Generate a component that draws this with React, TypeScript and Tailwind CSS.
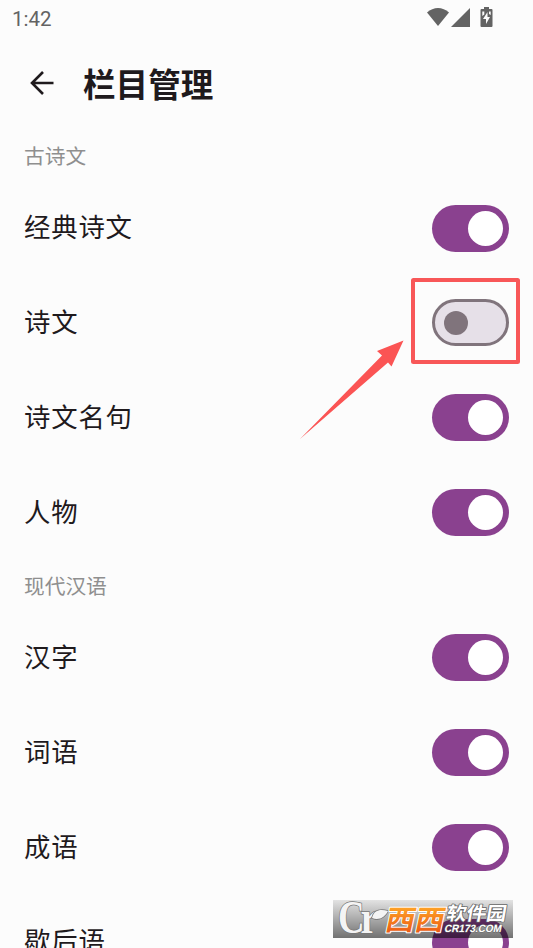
import React from 'react';

interface Item {
  label: string;
  enabled: boolean;
}

interface Section {
  title: string;
  items: Item[];
}

const sections: Section[] = [
  {
    title: '古诗文',
    items: [
      { label: '经典诗文', enabled: true },
      { label: '诗文', enabled: false },
      { label: '诗文名句', enabled: true },
      { label: '人物', enabled: true }
    ]
  },
  {
    title: '现代汉语',
    items: [
      { label: '汉字', enabled: true },
      { label: '词语', enabled: true },
      { label: '成语', enabled: true },
      { label: '歇后语', enabled: true }
    ]
  }
];

const StatusBar: React.FC = () => (
  <div className="flex h-9 items-center justify-between pl-3 pr-10 text-[#636363]">
    <span className="pt-0.5 font-[Roboto] text-[20.5px] leading-none">1:42</span>
    <div className="flex items-center pb-0.5">
      <svg width="22" height="18" viewBox="0 0 22 18" fill="currentColor">
        <path d="M0 4.5C6.5-1.5 15.5-1.5 22 4.5L11 18Z" />
      </svg>
      <svg className="ml-0.5" width="19" height="19" viewBox="0 0 19 19" fill="currentColor">
        <path d="M19 0V19H0Z" />
      </svg>
      <svg className="ml-2.5" width="13" height="20" viewBox="0 0 13 20">
        <path d="M4 0h5v2h2.5q1 0 1 1v16q0 1-1 1H1.5q-1 0-1-1V3q0-1 1-1H4Z" fill="currentColor" />
        <path d="M7.5 5 3 12h3v5l4-7H7.5Z" fill="#fcfcfc" />
        <path d="M2.3 4.5h2v3l-2 1.5ZM9 4.5h1.7V8L9 7Z" fill="#fcfcfc" />
      </svg>
    </div>
  </div>
);

const Toggle: React.FC<{ enabled: boolean }> = ({ enabled }) => (
  <button
    role="switch"
    aria-checked={enabled}
    className={`flex h-[47px] w-[77px] items-center rounded-full ${
      enabled ? 'justify-end bg-[#8a418f] pr-1.5' : 'border-[3px] border-[#80747c] bg-[#e6e0e8] pl-[9px]'
    }`}
  >
    <span className={`rounded-full ${enabled ? 'size-[35px] bg-white' : 'size-6 bg-[#80747c]'}`} />
  </button>
);

// Red frame and arrow that point out the switched-off item
const Callout: React.FC = () => (
  <svg
    className="pointer-events-none absolute left-[300px] top-[278px]"
    width="221"
    height="162"
    viewBox="0 0 221 162"
  >
    <rect x="113" y="2" width="105" height="82" rx="0.5" fill="none" stroke="#f85758" strokeWidth="4" strokeLinejoin="round" />
    <path d="M103.5 62.5 77 73 82 77.5 0 161 88 84.5 91.5 88.5Z" fill="#fb5454" />
  </svg>
);

const Watermark: React.FC = () => (
  <div className="absolute left-[333px] top-[900px] h-[38px] w-[180px] bg-linear-to-b from-black/10 to-black/55">
    <svg width="180" height="38" viewBox="0 0 180 38">
      <defs>
        <linearGradient id="orange" x1="0" y1="0" x2="0" y2="1">
          <stop offset="0.2" stopColor="#ffa928" />
          <stop offset="1" stopColor="#e84d12" />
        </linearGradient>
      </defs>
      <g fill="#f4f4f4" stroke="#777" strokeWidth="1.6" paintOrder="stroke" fontFamily="Liberation Serif, serif">
        <text transform="translate(5 33) scale(0.8 1)" fontSize="46" fontWeight="700">C</text>
        <text transform="translate(27.500 32.5) scale(0.85 1)" fontSize="46" fontWeight="700">r</text>
        <path d="M39 18C41 10 47 9 55 11C52 17 46 21 39 18Z" />
      </g>
      <g fontFamily="Noto Sans CJK SC, sans-serif" fontWeight="700" paintOrder="stroke" strokeLinejoin="round">
        <text
          transform="translate(51 29.5) skewX(-12)"
          fontSize="28"
          textLength="59"
          lengthAdjust="spacingAndGlyphs"
          fill="url(#orange)"
          stroke="#fff"
          strokeWidth="2"
        >
          西西
        </text>
        <text
          transform="translate(112.5 20) skewX(-10)"
          fontSize="18.5"
          textLength="60"
          lengthAdjust="spacingAndGlyphs"
          fill="#fff"
          stroke="#666"
          strokeWidth="1.5"
        >
          软件园
        </text>
      </g>
      <text
        transform="translate(111 32) skewX(-12)"
        fontFamily="Liberation Sans, sans-serif"
        fontWeight="700"
        fontSize="10.5"
        textLength="57"
        lengthAdjust="spacingAndGlyphs"
        fill="#fff"
        stroke="#666"
        strokeWidth="1"
        paintOrder="stroke"
      >
        CR173.COM
      </text>
    </svg>
  </div>
);

const App: React.FC = () => {
  return (
    <div className="relative h-[948px] w-[533px] overflow-hidden bg-[#fcfcfc] font-['Noto_Sans_CJK_SC',sans-serif] text-[#1f1a1d]">
      <StatusBar />

      {/* App bar */}
      <header className="flex h-[94.6px] items-center pl-[29.5px]">
        <svg width="24" height="24" viewBox="0 0 24 24" fill="none" stroke="currentColor" strokeWidth="2.6">
          <path d="M23.5 12H2M13 1 2 12l11 11" />
        </svg>
        <h1 className="ml-[29.5px] text-[32.6px] font-bold leading-none">栏目管理</h1>
      </header>

      {sections.map((section) => (
        <section key={section.title}>
          <h2 className="flex h-[50px] items-center pl-6 text-[20.7px] text-[#8f8f8f]">{section.title}</h2>
          {section.items.map((item) => (
            <div key={item.label} className="flex h-[94.9px] items-center justify-between pl-6 pr-6">
              <span className="pb-1 text-[26.4px] tracking-[0.8px]">{item.label}</span>
              <Toggle enabled={item.enabled} />
            </div>
          ))}
        </section>
      ))}

      <Callout />
      <Watermark />
    </div>
  );
};

export default App;
